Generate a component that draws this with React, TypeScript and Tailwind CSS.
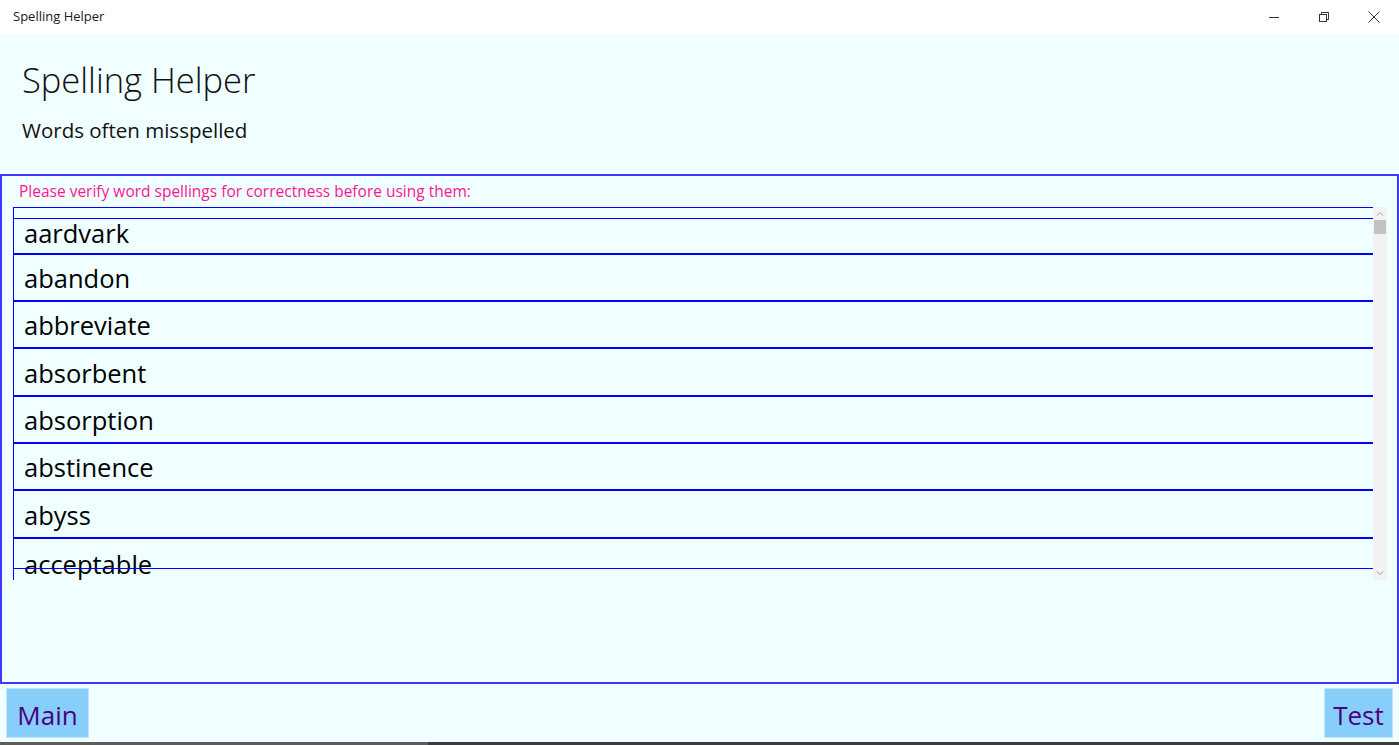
import React from "react";

const words: [string, string][] = [
  ["aardvark", "h-[36px]"],
  ["abandon", "h-[47px]"],
  ["abbreviate", "h-[47px]"],
  ["absorbent", "h-[48px]"],
  ["absorption", "h-[47px]"],
  ["abstinence", "h-[47px]"],
  ["abyss", "h-[48px]"],
];

export default function App() {
  return (
    <div
      className="w-[1399px] h-[745px] bg-[#f0ffff] flex flex-col overflow-hidden text-black"
      style={{ fontFamily: '"Segoe UI", "Open Sans", "Noto Sans", sans-serif' }}
    >
      {/* Title bar */}
      <div className="h-[34px] bg-white flex items-center shrink-0">
        <div className="pl-[13px] text-[13px] text-[#1a1a1a] flex-1">Spelling Helper</div>
        <div className="flex h-full">
          <div className="w-[50px] flex items-center justify-center">
            <svg width="12" height="12" viewBox="0 0 12 12">
              <path d="M1 6.5h10" stroke="#333" strokeWidth="1" />
            </svg>
          </div>
          <div className="w-[50px] flex items-center justify-center">
            <svg width="12" height="12" viewBox="0 0 12 12" fill="none" stroke="#333" strokeWidth="1">
              <rect x="1.5" y="3.5" width="7" height="7" />
              <path d="M3.5 3.5V1.5h7v7h-2" />
            </svg>
          </div>
          <div className="w-[50px] flex items-center justify-center">
            <svg width="12" height="12" viewBox="0 0 12 12" fill="none" stroke="#333" strokeWidth="1">
              <path d="M0.5 0.5l11 11M11.5 0.5l-11 11" />
            </svg>
          </div>
        </div>
      </div>

      {/* Header */}
      <div className="h-[140px] shrink-0 pl-[22px] pt-[24px]">
        <div className="text-[34.5px] font-light leading-[44px] text-[#111]">Spelling Helper</div>
        <div className="text-[20.5px] leading-[28px] mt-[14px] text-[#111]">Words often misspelled</div>
      </div>

      {/* Bordered box */}
      <div className="h-[510px] shrink-0 border-2 border-[#3a3aff] flex flex-col">
        <div className="h-[31px] pl-[17px] pt-[4px] text-[15.5px] leading-[22px] text-[#ff1493]">
          Please verify word spellings for correctness before using them:
        </div>
        <div className="ml-[11px] mr-[10px] h-[373px] flex relative">
          <div className="flex-1 border-l border-t border-[#0000ff] overflow-hidden">
            <div className="h-[10px]" />
            <div className="border-t border-[#0000ff]" />
            {words.map(([w, h], i) => (
              <div
                key={w}
                className={`${h} border-b-2 border-[#0000ff] flex items-center pl-[10px] text-[25.5px] leading-none`}
              >
                <span className={i === 0 ? "-mt-[4px]" : "mt-[3px]"}>{w}</span>
              </div>
            ))}
            <div className="h-[47px] flex items-start pl-[10px] pt-[10px] text-[25.5px] leading-[30px]">
              acceptable
            </div>
          </div>
          <div className="absolute left-0 right-[14px] top-[361px] h-px bg-[#0000ff]" />
          {/* Scrollbar */}
          <div className="w-[14px] bg-[#f2f2f2] flex flex-col items-center justify-between">
            <div className="flex flex-col items-center w-full">
              <svg width="10" height="10" viewBox="0 0 10 10" className="mt-[2px]" fill="none" stroke="#999" strokeWidth="1">
                <path d="M2 6.5l3-3 3 3" />
              </svg>
              <div className="w-[12px] h-[14px] bg-[#c2c2c2] mt-[1px]" />
            </div>
            <svg width="10" height="10" viewBox="0 0 10 10" className="mb-[2px]" fill="none" stroke="#999" strokeWidth="1">
              <path d="M2 3.5l3 3 3-3" />
            </svg>
          </div>
        </div>
      </div>

      {/* Bottom buttons */}
      <div className="flex-1 flex justify-between items-start pt-[4px] px-[6px]">
        <button className="h-[50px] w-[83px] bg-[#87cefa] border border-[#bfe6ff] text-[#4b0082] text-[26px] flex items-center justify-center pt-[4px]">
          Main
        </button>
        <button className="h-[50px] w-[69px] bg-[#87cefa] border border-[#bfe6ff] text-[#4b0082] text-[26px] flex items-center justify-center pt-[4px]">
          Test
        </button>
      </div>
      <div className="h-[3px] flex shrink-0">
        <div className="w-[428px] bg-[#5c5c5c]" />
        <div className="flex-1 bg-[#3c3c3c]" />
      </div>
    </div>
  );
}
